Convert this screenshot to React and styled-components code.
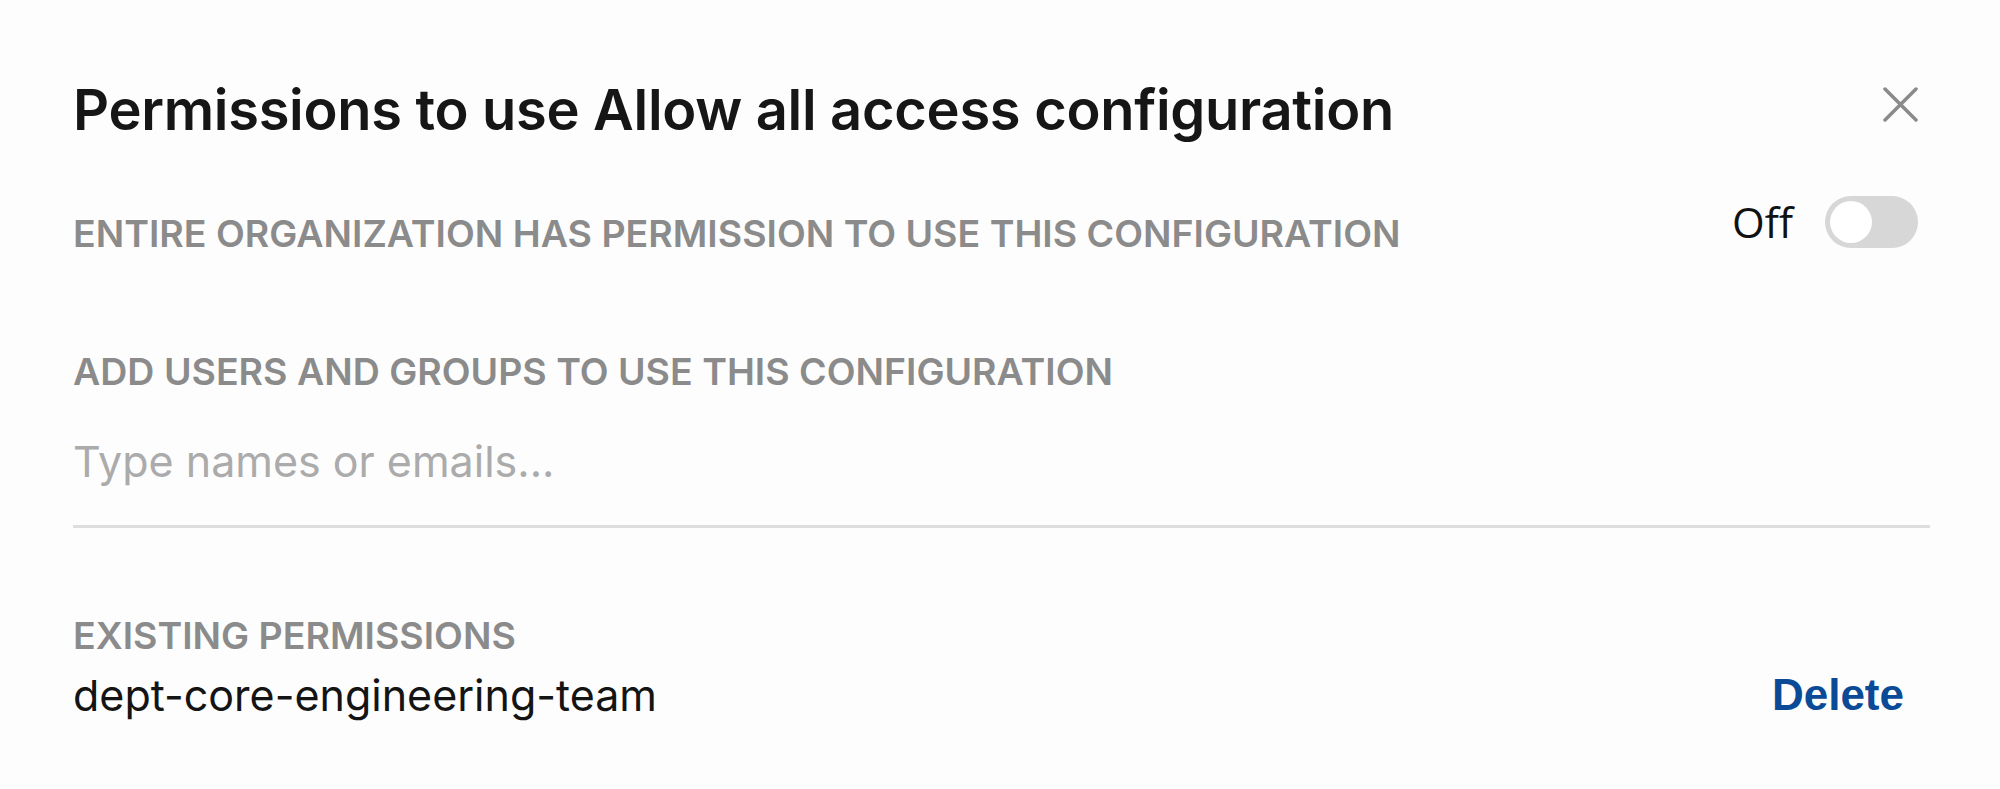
import React from 'react';
import styled, { createGlobalStyle } from 'styled-components';

const GlobalStyle = createGlobalStyle`
  html, body {
    margin: 0;
    padding: 0;
    background: #fdfdfd;
  }
  body {
    font-family: 'Inter', 'Noto Sans', sans-serif;
  }
`;

const Panel = styled.div`
  width: 2000px;
  height: 789px;
  box-sizing: border-box;
  padding: 69px 82px 0 73px;
  background: #fdfdfd;
  display: flex;
  flex-direction: column;
`;

const Header = styled.div`
  display: flex;
  justify-content: space-between;
  align-items: flex-start;
`;

const Title = styled.h2`
  margin: 8px 0 0;
  color: #161616;
  font-family: 'Inter', sans-serif;
  font-weight: 600;
  font-size: 56px;
  line-height: 67px;
  letter-spacing: -0.3px;
`;

const CloseBtn = styled.button`
  width: 35px;
  height: 35px;
  margin-top: 18px;
  padding: 0;
  border: none;
  background: none;
  cursor: pointer;
  display: flex;
`;

const Row = styled.div`
  display: flex;
  justify-content: space-between;
  align-items: flex-start;
  margin-top: ${(p) => p.$top || 0}px;
`;

const Caption = styled.div`
  color: #8b8b8b;
  font-family: 'Inter', sans-serif;
  font-weight: 600;
  font-size: 37.5px;
  line-height: 45px;
  text-transform: uppercase;
  margin-top: ${(p) => p.$top || 0}px;
`;

const SwitchWrap = styled.label`
  display: flex;
  align-items: center;
  gap: 32px;
  color: #111;
  font-family: 'Open Sans', sans-serif;
  font-size: 42px;
  line-height: 52px;
`;

const Track = styled.span`
  width: 93px;
  height: 52px;
  border-radius: 26px;
  background: #d7d7d7;
  box-sizing: border-box;
  padding: 5px;
  display: flex;
  align-items: center;
`;

const Knob = styled.span`
  width: 42px;
  height: 42px;
  border-radius: 50%;
  background: #ffffff;
`;

const SearchInput = styled.input`
  display: block;
  width: calc(100% + 12px);
  box-sizing: border-box;
  margin-top: 40px;
  padding: 0 0 37px;
  border: none;
  border-bottom: 3px solid #dedede;
  background: transparent;
  outline: none;
  color: #111;
  font-family: 'Inter', sans-serif;
  font-size: 43px;
  line-height: 54px;

  &::placeholder {
    color: #ababab;
  }
`;

const Name = styled.span`
  color: #141414;
  font-family: 'Inter', sans-serif;
  font-size: 43px;
  line-height: 54px;
`;

const DeleteBtn = styled.button`
  padding: 0;
  margin-right: 14px;
  border: none;
  background: none;
  cursor: pointer;
  color: #0b4a96;
  font-family: 'Liberation Sans', Arial, sans-serif;
  font-weight: 700;
  font-size: 44px;
  line-height: 54px;
`;

export default function App() {
  return (
    <>
      <GlobalStyle />
      <Panel>
        <Header>
          <Title>Permissions to use Allow all access configuration</Title>
          <CloseBtn aria-label="Close">
            <svg width="35" height="35" viewBox="0 0 35 35">
              <path d="M2 2 L33 33 M33 2 L2 33" stroke="#8a8a8a" strokeWidth="3.5" strokeLinecap="round" />
            </svg>
          </CloseBtn>
        </Header>

        <Row $top={52}>
          <Caption $top={15}>Entire organization has permission to use this configuration</Caption>
          <SwitchWrap>
            Off
            <Track>
              <Knob />
            </Track>
          </SwitchWrap>
        </Row>

        <Caption $top={93}>Add users and groups to use this configuration</Caption>
        <SearchInput placeholder="Type names or emails..." />

        <Caption $top={85}>Existing permissions</Caption>
        <Row $top={10}>
          <Name>dept-core-engineering-team</Name>
          <DeleteBtn>Delete</DeleteBtn>
        </Row>
      </Panel>
    </>
  );
}
